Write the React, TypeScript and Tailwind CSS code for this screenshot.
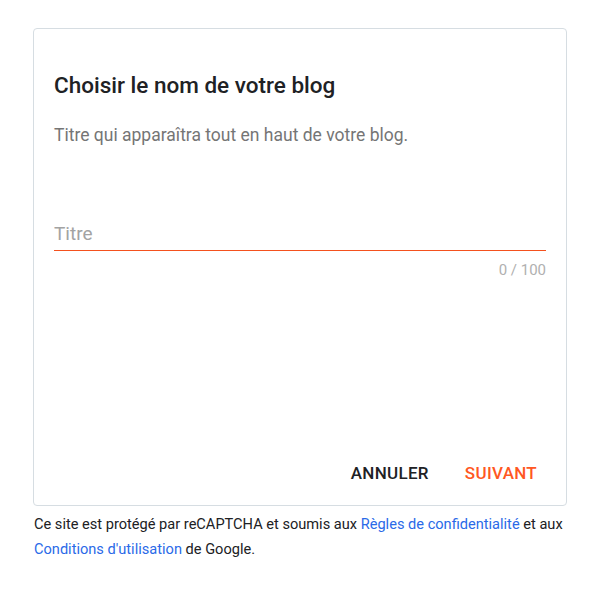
export default function App() {
  return (
    <div className="min-h-[591px] bg-white font-['Roboto',sans-serif] text-[#202124]">
      <div className="w-[534px] ml-[33px] pt-[28px]">
        {/* Card */}
        <div className="h-[478px] border border-[#d6dde2] rounded-[4px] px-5 pt-[42px] pb-[13px] flex flex-col">
          <h1 className="text-[22.5px] leading-[28px] font-medium">Choisir le nom de votre blog</h1>
          <p className="mt-[24px] text-[17.5px] leading-[24px] text-[#757575]">
            Titre qui apparaîtra tout en haut de votre blog.
          </p>

          {/* Input */}
          <div className="mt-[69px]">
            <input
              type="text"
              placeholder="Titre"
              className="block w-full h-[34px] text-[19px] outline-none placeholder:text-[#a3a3a3] bg-transparent"
            />
            <div className="h-px bg-[#f4511e]" />
            <div className="mt-[9px] text-right text-[15px] leading-[20px] text-[#b0b0b0]">0 / 100</div>
          </div>

          {/* Actions */}
          <div className="mt-auto flex justify-end gap-[18px]">
            <button className="px-[9px] h-[36px] text-[17px] font-medium uppercase tracking-[0.3px] text-[#202124]">
              Annuler
            </button>
            <button className="px-[9px] h-[36px] text-[17px] font-medium uppercase tracking-[0.3px] text-[#ff5722]">
              Suivant
            </button>
          </div>
        </div>

        {/* Footer */}
        <p className="mt-[6px] pl-[1px] text-[14.6px] leading-[25px]">
          Ce site est protégé par reCAPTCHA et soumis aux{" "}
          <a href="#" className="text-[#2a6ae8]">Règles de confidentialité</a> et aux{" "}
          <a href="#" className="text-[#2a6ae8]">Conditions d'utilisation</a> de Google.
        </p>
      </div>
    </div>
  );
}
